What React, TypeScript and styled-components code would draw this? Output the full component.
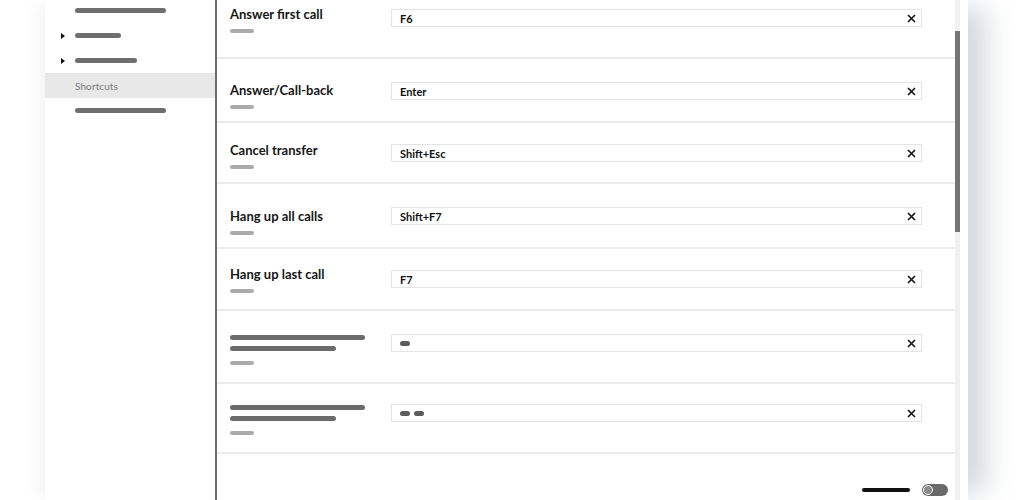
import React from 'react'
import styled, { createGlobalStyle } from 'styled-components'

const GlobalStyle = createGlobalStyle`
  html, body {
    margin: 0;
    padding: 0;
    height: 500px;
    overflow: hidden;
    background: #fff;
  }
  body {
    font-family: Lato, 'Liberation Sans', sans-serif;
  }
`

type Shortcut = {
  label?: string
  keys?: string
  pills?: number
  height: number
  labelTop: number
  inputTop: number
}

const shortcuts: Shortcut[] = [
  { label: 'Answer first call', keys: 'F6', height: 59, labelTop: 10, inputTop: 9 },
  { label: 'Answer/Call-back', keys: 'Enter', height: 64, labelTop: 27, inputTop: 23 },
  { label: 'Cancel transfer', keys: 'Shift+Esc', height: 61, labelTop: 23, inputTop: 21 },
  { label: 'Hang up all calls', keys: 'Shift+F7', height: 65, labelTop: 28, inputTop: 23 },
  { label: 'Hang up last call', keys: 'F7', height: 62, labelTop: 21, inputTop: 21 },
  { pills: 1, height: 73, labelTop: 24, inputTop: 23 },
  { pills: 2, height: 70, labelTop: 21, inputTop: 20 },
]

const navItems = [
  { width: 91 },
  { width: 46, caret: true },
  { width: 62, caret: true },
  { text: 'Shortcuts', active: true },
  { width: 91 },
]

const Page = styled.div`
  height: 500px;
  padding-left: 45px;
  display: flex;
`

const Window = styled.div`
  width: 923px;
  height: 100%;
  display: flex;
  background: #fff;
  box-shadow: 26px 0 26px -8px rgba(90, 105, 120, 0.26),
    -10px 0 14px -4px rgba(90, 105, 120, 0.08);
`

const Sidebar = styled.nav`
  width: 170px;
  flex: none;
  border-right: 2px solid #6c6c6c;
`

const NavList = styled.ul`
  list-style: none;
  margin: -2px 0 0;
  padding: 0;
`

const NavItem = styled.li<{ $active?: boolean }>`
  height: 25px;
  display: flex;
  align-items: center;
  padding-left: 15px;
  background: ${(p) => (p.$active ? '#e8e8e8' : 'transparent')};
`

const CaretSlot = styled.span`
  width: 15px;
  flex: none;
  display: flex;
  align-items: center;
`

const Caret = styled.span`
  width: 0;
  height: 0;
  margin-left: 1px;
  border-top: 3px solid transparent;
  border-bottom: 3px solid transparent;
  border-left: 4px solid #111;
`

const NavBar = styled.span<{ $w: number }>`
  width: ${(p) => p.$w}px;
  height: 5px;
  border-radius: 3px;
  background: #6f6f6f;
`

const NavText = styled.span`
  font-size: 10px;
  color: #7a7a7a;
  letter-spacing: 0.1px;
`

const Content = styled.main`
  width: 738px;
  flex: none;
  display: flex;
  flex-direction: column;
`

const Row = styled.div<{ $h: number }>`
  height: ${(p) => p.$h}px;
  box-sizing: border-box;
  flex: none;
  display: grid;
  grid-template-columns: 161px 531px;
  padding-left: 13px;
  border-bottom: 2px solid #ececec;
`

const LabelCol = styled.div<{ $top: number }>`
  padding-top: ${(p) => p.$top}px;
  display: flex;
  flex-direction: column;
  align-items: flex-start;
`

const Label = styled.div`
  font-weight: 700;
  font-size: 13px;
  line-height: 16px;
  color: #161616;
`

const Bar = styled.span<{ $w: number; $light?: boolean; $gap: number }>`
  width: ${(p) => p.$w}px;
  height: ${(p) => (p.$light ? 4 : 5)}px;
  margin-top: ${(p) => p.$gap}px;
  border-radius: 3px;
  background: ${(p) => (p.$light ? '#ababab' : '#6b6b6b')};
`

const KeyCol = styled.div<{ $top: number }>`
  padding-top: ${(p) => p.$top}px;
`

const KeyInput = styled.div`
  height: 18px;
  box-sizing: border-box;
  border: 1px solid #e3e3e3;
  display: flex;
  align-items: center;
  gap: 4px;
  padding: 0 5px 0 8px;
  font-weight: 700;
  font-size: 11px;
  color: #111;
`

const Pill = styled.span`
  width: 10px;
  height: 5px;
  border-radius: 3px;
  background: #5c5c5c;
`

const Clear = styled.svg`
  margin-left: auto;
  width: 9px;
  height: 9px;
  flex: none;
`

const Footer = styled.div`
  height: 72px;
  flex: none;
  display: flex;
  justify-content: flex-end;
  align-items: center;
  gap: 12px;
  padding-right: 7px;
`

const Line = styled.span`
  width: 48px;
  height: 4px;
  border-radius: 2px;
  background: #111;
`

const Toggle = styled.span`
  width: 26px;
  height: 12px;
  box-sizing: border-box;
  border-radius: 6px;
  background: #6a6a6a;
  display: flex;
  align-items: center;
  padding-left: 1px;
`

const Knob = styled.span`
  width: 10px;
  height: 10px;
  box-sizing: border-box;
  border-radius: 50%;
  border: 1.5px solid #fff;
  background: #8a8a8a;
`

const Scrollbar = styled.div`
  width: 5px;
  flex: none;
  background: #f1f1f1;
`

const Thumb = styled.div`
  margin-top: 31px;
  height: 201px;
  background: #757575;
`

const Gutter = styled.div`
  width: 8px;
  flex: none;
`

const ClearIcon = () => (
  <Clear viewBox="0 0 9 9">
    <path d="M1 1L8 8M8 1L1 8" stroke="#111" strokeWidth="1.6" />
  </Clear>
)

export default function App() {
  return (
    <>
      <GlobalStyle />
      <Page>
        <Window>
          <Sidebar>
            <NavList>
              {navItems.map((item, i) => (
                <NavItem key={i} $active={item.active}>
                  <CaretSlot>{item.caret && <Caret />}</CaretSlot>
                  {item.text ? <NavText>{item.text}</NavText> : <NavBar $w={item.width!} />}
                </NavItem>
              ))}
            </NavList>
          </Sidebar>
          <Content>
            {shortcuts.map((s, i) => (
              <Row key={i} $h={s.height}>
                {s.label ? (
                  <LabelCol $top={s.labelTop - 4}>
                    <Label>{s.label}</Label>
                    <Bar $w={24} $light $gap={7} />
                  </LabelCol>
                ) : (
                  <LabelCol $top={s.labelTop}>
                    <Bar $w={135} $gap={0} />
                    <Bar $w={106} $gap={6} />
                    <Bar $w={24} $light $gap={10} />
                  </LabelCol>
                )}
                <KeyCol $top={s.inputTop}>
                  <KeyInput>
                    {s.keys ?? Array.from({ length: s.pills ?? 0 }, (_, j) => <Pill key={j} />)}
                    <ClearIcon />
                  </KeyInput>
                </KeyCol>
              </Row>
            ))}
            <Footer>
              <Line />
              <Toggle>
                <Knob />
              </Toggle>
            </Footer>
          </Content>
          <Scrollbar>
            <Thumb />
          </Scrollbar>
          <Gutter />
        </Window>
      </Page>
    </>
  )
}
